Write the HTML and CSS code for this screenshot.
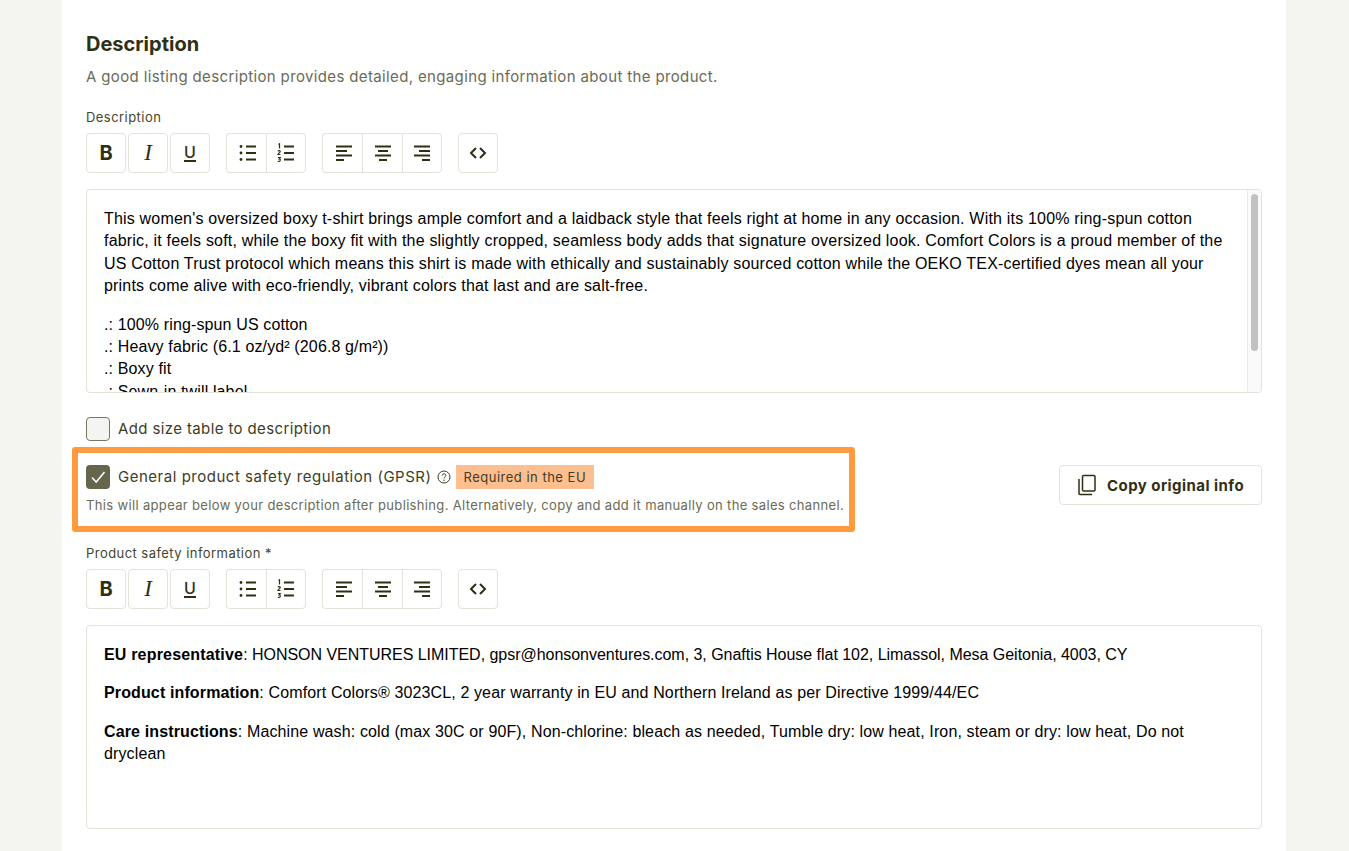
FILE: index.html
```html
<!DOCTYPE html>
<html>

<head>
    <title>Description</title>
    <link rel="stylesheet" href="styles.css">
</head>

<body>

    <svg class="sprite" xmlns="http://www.w3.org/2000/svg">
        <symbol id="i-ul" viewBox="0 0 24 24">
            <circle cx="6" cy="5.5" r="1.4" fill="currentColor" />
            <circle cx="6" cy="12" r="1.4" fill="currentColor" />
            <circle cx="6" cy="18.5" r="1.4" fill="currentColor" />
            <path d="M11 5.5h10M11 12h10M11 18.5h10" stroke="currentColor" stroke-width="2" fill="none" />
        </symbol>
        <symbol id="i-ol" viewBox="0 0 24 24">
            <path d="M4.500 3.500l1-.7v4.700M3.900 10.200c.5-.9 2.500-.7 2.300.5-.1.8-2.100 1.700-2.300 2.800h2.500M4 16.500h2.200l-1 1.300c1.400-.1 1.500 2.700-.1 2.700-.5 0-1-.2-1.200-.6" stroke="currentColor" stroke-width="1.200" fill="none" />
            <path d="M10 5.500h10M10 12h10M10 18.500h10" stroke="currentColor" stroke-width="2" fill="none" />
        </symbol>
        <symbol id="i-left" viewBox="0 0 24 24">
            <path d="M5 5.500h16M5 10h11M5 14.500h16M5 19h8" stroke="currentColor" stroke-width="2" fill="none" />
        </symbol>
        <symbol id="i-center" viewBox="0 0 24 24">
            <path d="M4 5.500h16M7 10h10M4 14.500h16M8 19h8" stroke="currentColor" stroke-width="2" fill="none" />
        </symbol>
        <symbol id="i-right" viewBox="0 0 24 24">
            <path d="M4 5.500h16M9 10h11M4 14.500h16M12 19h8" stroke="currentColor" stroke-width="2" fill="none" />
        </symbol>
        <symbol id="i-code" viewBox="0 0 24 24">
            <path d="M10 7l-5 5 5 5M14 7l5 5-5 5" stroke="currentColor" stroke-width="2" fill="none" />
        </symbol>
    </svg>

    <div class="panel">

        <h2 class="title">Description</h2>
        <p class="subtitle">A good listing description provides detailed, engaging information about the product.</p>

        <div class="field-label">Description</div>
        <div class="toolbar">
            <div class="tool-group">
                <button class="tool tool-single tool-b">B</button>
                <button class="tool tool-single tool-i">I</button>
                <button class="tool tool-single"><span class="tool-u">U</span></button>
            </div>
            <div class="tool-group tool-joined">
                <button class="tool"><svg class="icon"><use href="#i-ul" /></svg></button>
                <button class="tool"><svg class="icon"><use href="#i-ol" /></svg></button>
            </div>
            <div class="tool-group tool-joined">
                <button class="tool"><svg class="icon"><use href="#i-left" /></svg></button>
                <button class="tool"><svg class="icon"><use href="#i-center" /></svg></button>
                <button class="tool"><svg class="icon"><use href="#i-right" /></svg></button>
            </div>
            <div class="tool-group">
                <button class="tool tool-single"><svg class="icon"><use href="#i-code" /></svg></button>
            </div>
        </div>

        <div class="editor">
            <div class="editor-body">
                <p class="wide-line">This women's oversized boxy t-shirt brings ample comfort and a laidback style that feels right at home in any occasion. With its 100% ring-spun cotton fabric, it feels soft, while the boxy fit with the slightly cropped, seamless body adds that signature oversized look. Comfort Colors is a proud member of the US Cotton Trust protocol which means this shirt is made with ethically and sustainably sourced cotton while the OEKO TEX-certified dyes mean all your prints come alive with eco-friendly, vibrant colors that last and are salt-free.</p>
                <p>.: 100% ring-spun US cotton<br>.: Heavy fabric (6.1 oz/yd² (206.8 g/m²))<br>.: Boxy fit<br>.: Sewn-in twill label</p>
            </div>
            <div class="scrollbar">
                <div class="scrollbar-thumb"></div>
            </div>
        </div>

        <label class="check-row size-row">
            <span class="checkbox"></span>
            <span class="check-label">Add size table to description</span>
        </label>

        <div class="gpsr-row">
            <div class="gpsr-box">
                <div class="check-row">
                    <span class="checkbox checked">
                        <svg viewBox="0 0 24 24" width="24" height="24"><path d="M6 12.500l4.200 4.500L18.500 7" stroke="#fff" stroke-width="1.500" fill="none" /></svg>
                    </span>
                    <span class="check-label gpsr-label">General product safety regulation (GPSR)</span>
                    <svg class="help" viewBox="0 0 14 14" width="14" height="14">
                        <circle cx="7" cy="7" r="6" stroke="currentColor" fill="none" />
                        <path d="M5.200 5.600c0-2.300 3.700-2.300 3.700-.1 0 1.400-1.900 1.400-1.900 2.900" stroke="currentColor" fill="none" />
                        <circle cx="7" cy="10.200" r=".7" fill="currentColor" />
                    </svg>
                    <span class="tag">Required in the EU</span>
                </div>
                <p class="helper">This will appear below your description after publishing. Alternatively, copy and add it manually on the sales channel.</p>
            </div>
            <button class="copy-btn">
                <svg viewBox="0 0 20 22" width="20" height="22">
                    <path d="M6.500 1.500h10.500a1 1 0 0 1 1 1V16a1 1 0 0 1-1 1H6.500a1 1 0 0 1-1-1V2.500a1 1 0 0 1 1-1z" stroke="currentColor" stroke-width="1.500" fill="none" />
                    <path d="M2 5v14.500a1 1 0 0 0 1 1h12" stroke="currentColor" stroke-width="1.500" fill="none" />
                </svg>
                Copy original info
            </button>
        </div>

        <div class="field-label">Product safety information *</div>
        <div class="toolbar">
            <div class="tool-group">
                <button class="tool tool-single tool-b">B</button>
                <button class="tool tool-single tool-i">I</button>
                <button class="tool tool-single"><span class="tool-u">U</span></button>
            </div>
            <div class="tool-group tool-joined">
                <button class="tool"><svg class="icon"><use href="#i-ul" /></svg></button>
                <button class="tool"><svg class="icon"><use href="#i-ol" /></svg></button>
            </div>
            <div class="tool-group tool-joined">
                <button class="tool"><svg class="icon"><use href="#i-left" /></svg></button>
                <button class="tool"><svg class="icon"><use href="#i-center" /></svg></button>
                <button class="tool"><svg class="icon"><use href="#i-right" /></svg></button>
            </div>
            <div class="tool-group">
                <button class="tool tool-single"><svg class="icon"><use href="#i-code" /></svg></button>
            </div>
        </div>

        <div class="editor">
            <div class="editor-body">
                <p class="caps-line"><b>EU representative</b>: HONSON VENTURES LIMITED, gpsr@honsonventures.com, 3, Gnaftis House flat 102, Limassol, Mesa Geitonia, 4003, CY</p>
                <p><b>Product information</b>: Comfort Colors® 3023CL, 2 year warranty in EU and Northern Ireland as per Directive 1999/44/EC</p>
                <p><b>Care instructions</b>: Machine wash: cold (max 30C or 90F), Non-chlorine: bleach as needed, Tumble dry: low heat, Iron, steam or dry: low heat, Do not dryclean</p>
            </div>
        </div>

    </div>

</body>

</html>
```

FILE: styles.css
```css
html,
body {
    height: 100%;
}

body {
    margin: 0;
    background-color: #f4f5f0;
    color: #2f2f14;
    font-family: "Inter", "Liberation Sans", sans-serif;
    overflow: hidden;
}

.sprite {
    display: none;
}

.panel {
    width: 1176px;
    min-height: 100%;
    margin: 0 0 0 62px;
    padding: 32px 24px 0 24px;
    background-color: white;
}

.title {
    margin: 0;
    font-size: 20px;
    line-height: 24px;
    font-weight: 700;
}

.subtitle {
    margin: 11px 0 0 0;
    font-size: 15px;
    letter-spacing: .36px;
    line-height: 20px;
    color: #6a6b55;
}

.field-label {
    margin-top: 22px;
    margin-bottom: 7px;
    font-size: 13px;
    letter-spacing: .45px;
    line-height: 17px;
    color: #45452c;
}

.gpsr-row + .field-label {
    margin-top: 13px;
}

/* toolbar */

.toolbar {
    display: flex;
    gap: 16px;
    margin-bottom: 16px;
}

.tool-group {
    display: flex;
    gap: 2px;
}

.tool {
    display: flex;
    align-items: center;
    justify-content: center;
    width: 40px;
    height: 40px;
    padding: 0;
    background: white;
    border: 1px solid #e3e3d9;
    color: #2f2f14;
    font-family: inherit;
}

.tool-single {
    border-radius: 4px;
}

.tool-joined {
    gap: 0;
}

.tool-joined .tool:first-child {
    border-right: 0;
    border-radius: 4px 0 0 4px;
}

.tool-joined .tool:nth-child(2):not(:last-child) {
    border-right: 0;
}

.tool-joined .tool:last-child {
    border-radius: 0 4px 4px 0;
}

.tool-b {
    font-size: 20px;
    font-weight: 700;
}

.tool-i {
    font-family: "Liberation Serif", serif;
    font-style: italic;
    font-size: 23px;
}

.tool-u {
    font-size: 16px;
    font-weight: 500;
    line-height: 15px;
    border-bottom: 2px solid #2f2f14;
}

.icon {
    width: 24px;
    height: 24px;
}

/* editors */

.editor {
    display: flex;
    height: 204px;
    box-sizing: border-box;
    border: 1px solid #e3e3d9;
    border-radius: 4px;
    overflow: hidden;
    color: black;
    font-family: "Liberation Sans", Arial, sans-serif;
    font-size: 16px;
    line-height: 22.4px;
    letter-spacing: .13px;
}

.editor-body {
    flex: 1;
    padding: 18px 17px 0 17px;
    overflow: hidden;
}

.editor-body p {
    margin: 0 0 16px 0;
}

.editor-body .wide-line {
    letter-spacing: .19px;
}

.editor-body .caps-line {
    letter-spacing: -.03px;
}

.editor-body .caps-line b {
    letter-spacing: .18px;
}

.scrollbar {
    flex: none;
    box-sizing: border-box;
    width: 14px;
    padding: 4px 3px;
    background-color: #fafafa;
    border-left: 1px solid #ebebeb;
}

.scrollbar-thumb {
    height: 157px;
    background-color: #c1c1c1;
    border-radius: 4px;
}

/* checkboxes */

.check-row {
    display: flex;
    align-items: center;
}

.size-row {
    margin-top: 24px;
}

.checkbox {
    flex: none;
    box-sizing: border-box;
    width: 24px;
    height: 24px;
    margin-right: 8px;
    background-color: #f4f5f0;
    border: 1px solid #77775f;
    border-radius: 4px;
}

.checkbox.checked {
    background-color: #66664c;
    border: 0;
}

.checkbox svg {
    display: block;
}

.check-label {
    font-size: 15px;
    letter-spacing: .38px;
    line-height: 24px;
    color: #3d3d24;
}

.gpsr-label {
    letter-spacing: .52px;
}

.help {
    margin-left: 5px;
    color: #3d3d24;
}

.tag {
    margin-left: 5px;
    padding: 0 8px;
    background-color: #fdbf8f;
    font-size: 13px;
    letter-spacing: .5px;
    line-height: 24px;
    color: #3d3d24;
}

/* gpsr row */

.gpsr-row {
    display: flex;
    align-items: flex-start;
    justify-content: space-between;
    margin-top: 6px;
}

.gpsr-box {
    margin-left: -14px;
    padding: 12px 5px 11px 8px;
    border: 6px solid #ff9b3f;
    border-radius: 3px;
}

.helper {
    margin: 6px 0 0 0;
    font-size: 13px;
    letter-spacing: .34px;
    line-height: 20px;
    color: #6a6b55;
}

.copy-btn {
    display: flex;
    align-items: center;
    justify-content: center;
    gap: 10px;
    width: 203px;
    height: 40px;
    margin-top: 18px;
    padding: 0;
    background: white;
    border: 1px solid #e3e3d9;
    border-radius: 4px;
    color: #2f2f14;
    font-family: inherit;
    font-size: 15px;
    letter-spacing: .45px;
    font-weight: 700;
}
```
